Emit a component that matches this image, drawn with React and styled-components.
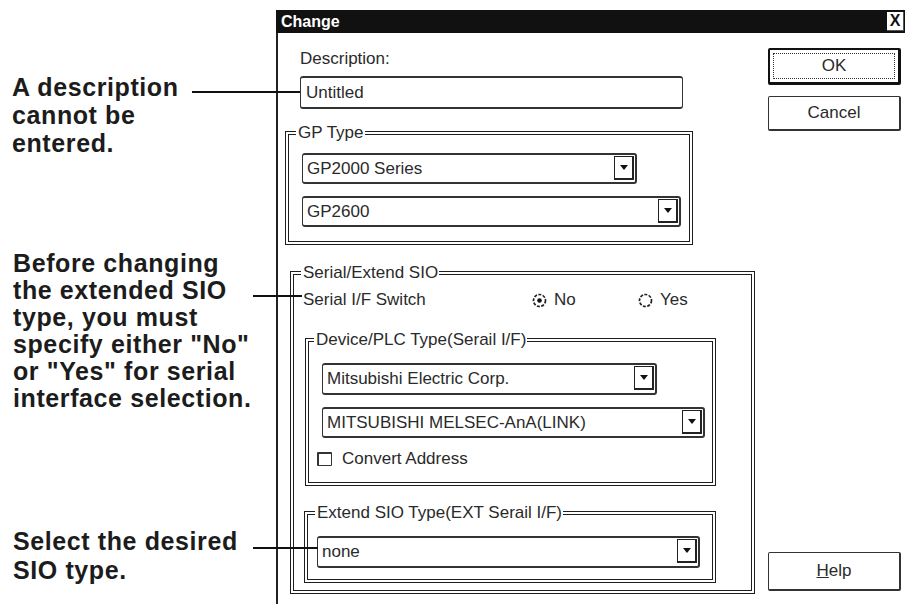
import React from "react";
import styled, { createGlobalStyle, css } from "styled-components";

const GlobalStyle = createGlobalStyle`
  html, body {
    margin: 0;
    padding: 0;
    background: #fff;
  }
  body {
    font-family: "Liberation Sans", Arial, sans-serif;
    color: #222;
  }
`;

const Page = styled.div`
  display: flex;
  width: 905px;
  height: 604px;
  overflow: hidden;
  background: #fff;
`;

/* left side callouts */
const Notes = styled.div`
  flex: none;
  width: 276px;
  padding-left: 13px;
  box-sizing: border-box;
  font-family: "Liberation Sans", Arial, Helvetica, sans-serif;
  font-weight: bold;
  font-size: 25px;
  letter-spacing: 0.6px;
  color: #1c1c1c;
  white-space: nowrap;
`;

const Note = styled.div`
  position: relative;
  margin-top: ${p => p.$top}px;
  margin-left: ${p => p.$indent || 0}px;
  line-height: ${p => p.$lh}px;
`;

const Leader = styled.span`
  position: absolute;
  z-index: 2;
  left: ${p => p.$left}px;
  top: ${p => p.$y}px;
  width: ${p => p.$width}px;
  height: 2px;
  background: #111;
`;

/* dialog */
const Dialog = styled.div`
  flex: 1;
  margin-top: 10px;
  display: flex;
  flex-direction: column;
  font-family: "Liberation Sans", Arial, sans-serif;
  font-size: 17px;
  color: #2a2a2a;
`;

const TitleBar = styled.div`
  flex: none;
  height: 23px;
  display: flex;
  align-items: center;
  justify-content: space-between;
  padding-left: 5px;
  background: #111;
  color: #fff;
  font-weight: bold;
  font-size: 16px;
`;

const CloseBox = styled.div`
  width: 16px;
  height: 18px;
  margin-right: 1px;
  display: flex;
  align-items: center;
  justify-content: center;
  background: #fff;
  border-right: 1px solid #555;
  border-bottom: 1px solid #555;
  color: #111;
  font-size: 16px;
  font-weight: bold;
`;

const Body = styled.div`
  flex: 1;
  display: flex;
  border-left: 2px solid #222;
`;

const Main = styled.div`
  flex: none;
  width: 477px;
  box-sizing: border-box;
  padding: 16px 0 0 7px;
`;

const Label = styled.div`
  margin-left: 15px;
  line-height: 20px;
`;

const TextBox = styled.div`
  box-sizing: border-box;
  width: 383px;
  height: 33px;
  margin: 7px 0 0 15px;
  padding-left: 5px;
  display: flex;
  align-items: center;
  border: 1px solid #333;
  border-top-width: 2px;
  border-bottom-width: 2px;
  border-radius: 3px;
`;

const Group = styled.fieldset`
  box-sizing: border-box;
  width: ${p => p.$width}px;
  min-width: 0;
  margin: ${p => p.$top}px 0 0 ${p => p.$left || 0}px;
  padding: 0;
  border: 4px double #1e1e1e;
`;

const Legend = styled.legend`
  margin-left: ${p => p.$offset}px;
  padding: 0 1px 0 2px;
  line-height: 20px;
  font-size: 17px;
`;

const GroupBody = styled.div`
  padding: ${p => p.$pt}px 0 ${p => p.$pb}px ${p => p.$pl}px;
`;

const Combo = styled.div`
  box-sizing: border-box;
  width: ${p => p.$width}px;
  height: ${p => p.$h || 31}px;
  margin-top: ${p => p.$top || 0}px;
  display: flex;
  align-items: center;
  border: 1px solid #333;
  border-top-width: 2px;
  border-bottom-width: 2px;
  border-right-width: 2px;
  border-radius: 3px;
`;

const ComboText = styled.span`
  flex: 1;
  padding-left: 4px;
`;

const Arrow = styled.span`
  box-sizing: border-box;
  align-self: flex-start;
  width: 20px;
  height: 24px;
  margin: 1px 1px 0 0;
  padding-top: 8px;
  display: flex;
  justify-content: center;
  border: 1px solid #222;
  border-right-width: 2px;
  border-bottom-width: 2px;

  &::before {
    content: "";
    width: 0;
    height: 0;
    border-left: 4px solid transparent;
    border-right: 4px solid transparent;
    border-top: 5px solid #111;
  }
`;

const SwitchRow = styled.div`
  display: flex;
  align-items: center;
  height: 20px;
`;

const SwitchLabel = styled.span`
  width: 229px;
`;

const RadioOption = styled.span`
  display: flex;
  align-items: center;
  gap: 7px;
  width: ${p => p.$width || "auto"};
`;

const CheckRow = styled.div`
  display: flex;
  align-items: center;
  gap: 10px;
  height: 20px;
  margin: 11px 0 0 -5px;
`;

const CheckBox = styled.span`
  box-sizing: border-box;
  width: 15px;
  height: 14px;
  border: 1px solid #333;
  border-top-width: 2px;
  border-left-width: 2px;
  border-radius: 1px;
`;

const Buttons = styled.div`
  flex: none;
  width: 133px;
  margin-left: 13px;
  padding: 15px 0 13px;
  display: flex;
  flex-direction: column;
`;

const Button = styled.div`
  box-sizing: border-box;
  height: ${p => p.$h}px;
  margin-top: ${p => (p.$push ? "auto" : `${p.$top || 0}px`)};
  display: flex;
  align-items: center;
  justify-content: center;
  border: 1px solid #333;
  border-right-width: 2px;
  border-bottom-width: 2px;
  border-radius: 2px;
  ${p =>
    p.$default &&
    css`
      border: 2px solid #111;
      border-right-width: 3px;
      border-bottom-width: 3px;
      padding: 3px;
      align-items: stretch;
    `}
`;

const FocusRing = styled.span`
  flex: 1;
  display: flex;
  align-items: center;
  justify-content: center;
  border: 1px dotted #333;
`;

const Radio = ({ checked }) => (
  <svg width="15" height="15" viewBox="0 0 15 15">
    <circle
      cx="7.5"
      cy="7.5"
      r="6"
      fill="none"
      stroke="#222"
      strokeWidth="1.7"
      strokeDasharray="3 1.4"
    />
    {checked && <circle cx="7.5" cy="7.5" r="2.3" fill="#111" />}
  </svg>
);

const Select = ({ children, ...rest }) => (
  <Combo {...rest}>
    <ComboText>{children}</ComboText>
    <Arrow />
  </Combo>
);

export default function App() {
  return (
    <>
      <GlobalStyle />
      <Page>
        <Notes>
          <Note $top={73} $lh={28} $indent={-1}>
            A description
            <br />
            cannot be
            <br />
            entered.
            <Leader $left={180} $y={18} $width={108} />
          </Note>
          <Note $top={93} $lh={27}>
            Before changing
            <br />
            the extended SIO
            <br />
            type, you must
            <br />
            specify either "No"
            <br />
            or "Yes" for serial
            <br />
            interface selection.
            <Leader $left={240} $y={45} $width={49} />
          </Note>
          <Note $top={115} $lh={29}>
            Select the desired
            <br />
            SIO type.
            <Leader $left={240} $y={20} $width={65} />
          </Note>
        </Notes>

        <Dialog>
          <TitleBar>
            Change
            <CloseBox>X</CloseBox>
          </TitleBar>
          <Body>
            <Main>
              <Label>Description:</Label>
              <TextBox>Untitled</TextBox>

              <Group $top={14} $width={408}>
                <Legend $offset={7}>GP Type</Legend>
                <GroupBody $pt={10} $pb={14} $pl={13}>
                  <Select $width={335}>GP2000 Series</Select>
                  <Select $width={379} $top={12}>
                    GP2600
                  </Select>
                </GroupBody>
              </Group>

              <Group $top={18} $left={5} $width={465}>
                <Legend $offset={7}>Serial/Extend SIO</Legend>
                <GroupBody $pt={7} $pb={7} $pl={9}>
                  <SwitchRow>
                    <SwitchLabel>Serial I/F Switch</SwitchLabel>
                    <RadioOption $width="106px">
                      <Radio checked />
                      No
                    </RadioOption>
                    <RadioOption>
                      <Radio />
                      Yes
                    </RadioOption>
                  </SwitchRow>

                  <Group $top={20} $left={2} $width={411}>
                    <Legend $offset={5}>Device/PLC Type(Serail I/F)</Legend>
                    <GroupBody $pt={13} $pb={13} $pl={13}>
                      <Select $width={335} $h={32}>
                        Mitsubishi Electric Corp.
                      </Select>
                      <Select $width={383} $top={12}>
                        MITSUBISHI MELSEC-AnA(LINK)
                      </Select>
                      <CheckRow>
                        <CheckBox />
                        Convert Address
                      </CheckRow>
                    </GroupBody>
                  </Group>

                  <Group $top={17} $left={1} $width={412}>
                    <Legend $offset={7}>Extend SIO Type(EXT Serail I/F)</Legend>
                    <GroupBody $pt={13} $pb={11} $pl={9}>
                      <Select $width={383} $h={32}>
                        none
                      </Select>
                    </GroupBody>
                  </Group>
                </GroupBody>
              </Group>
            </Main>

            <Buttons>
              <Button $h={37} $default>
                <FocusRing>OK</FocusRing>
              </Button>
              <Button $h={35} $top={11}>
                Cancel
              </Button>
              <Button $h={39} $push>
                <span>
                  <u>H</u>elp
                </span>
              </Button>
            </Buttons>
          </Body>
        </Dialog>
      </Page>
    </>
  );
}
